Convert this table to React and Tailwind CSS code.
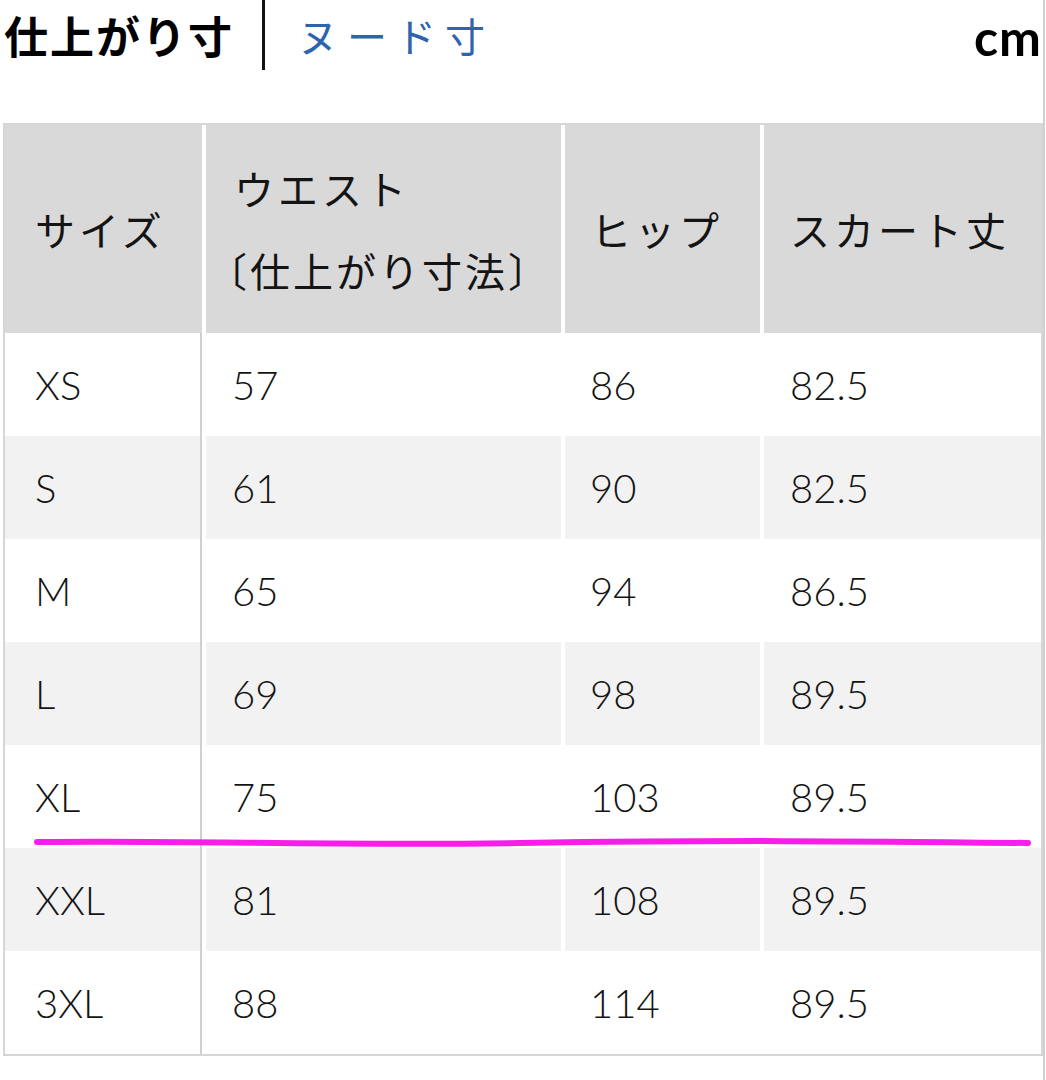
import React from "react";

const rows = [
  ["XS", "57", "86", "82.5"],
  ["S", "61", "90", "82.5"],
  ["M", "65", "94", "86.5"],
  ["L", "69", "98", "89.5"],
  ["XL", "75", "103", "89.5"],
  ["XXL", "81", "108", "89.5"],
  ["3XL", "88", "114", "89.5"],
];

const jp = { fontFamily: '"Noto Sans CJK JP", "Noto Sans", sans-serif' };
const num = { fontFamily: 'Lato, "Noto Sans", sans-serif' };

const App = () => {
  return (
    <div className="relative w-[1045px] h-[1080px] bg-white overflow-hidden border-r-2 border-[#d0d0d0]">
      {/* top tabs */}
      <div className="flex h-[70px] items-center">
        <span className="pl-[4px] text-[44px] font-bold text-black tracking-[2px] leading-none" style={jp}>
          仕上がり寸
        </span>
        <div className="self-stretch w-[3px] bg-[#111] ml-[28px]"></div>
        <span className="ml-[33px] text-[40px] text-[#2c64ad] tracking-[9px] leading-none" style={jp}>
          ヌード寸
        </span>
        <span className="ml-auto pr-[1px] pt-[4px] text-[50px] font-bold text-black leading-none tracking-[1px]" style={num}>
          cm
        </span>
      </div>

      {/* size table */}
      <div className="mt-[53px] ml-[3px] w-[1040px] border-2 border-[#d6d6d6] text-[#141414]">
        <div className="grid grid-cols-[197px_355px_195px_277px] gap-x-[4px] bg-white h-[208px] text-[40px] tracking-[4px]" style={jp}>
          <div className="bg-[#d9d9d9] flex items-center pl-[30px]">サイズ</div>
          <div className="bg-[#d9d9d9] flex flex-col justify-center pl-[28px] leading-[82px]">
            <span>ウエスト</span>
            <span className="-ml-[27px] tracking-[3px]">〔仕上がり寸法〕</span>
          </div>
          <div className="bg-[#d9d9d9] flex items-center pl-[26px]">ヒップ</div>
          <div className="bg-[#d9d9d9] flex items-center pl-[26px]">スカート丈</div>
        </div>
        {rows.map((r, i) => {
          const bg = i % 2 === 1 ? "bg-[#f2f2f2]" : "bg-white";
          return (
            <div
              key={r[0]}
              className="grid grid-cols-[197px_355px_195px_277px] gap-x-[4px] bg-white h-[103px] text-[40px] font-light"
              style={num}
            >
              <div className={`${bg} flex items-center pl-[30px] border-r-2 border-[#d0d0d0]`}>{r[0]}</div>
              <div className={`${bg} flex items-center pl-[26px]`}>{r[1]}</div>
              <div className={`${bg} flex items-center pl-[25px]`}>{r[2]}</div>
              <div className={`${bg} flex items-center pl-[26px]`}>{r[3]}</div>
            </div>
          );
        })}
      </div>

      {/* hand-drawn marker line */}
      <svg className="absolute left-0 top-0 pointer-events-none" width="1046" height="1080">
        <path
          d="M37 842 C 200 840, 320 846, 520 843 S 850 841, 1028 843"
          fill="none"
          stroke="#f81ee8"
          strokeWidth="6"
          strokeLinecap="round"
        />
      </svg>
    </div>
  );
};

export default App;
